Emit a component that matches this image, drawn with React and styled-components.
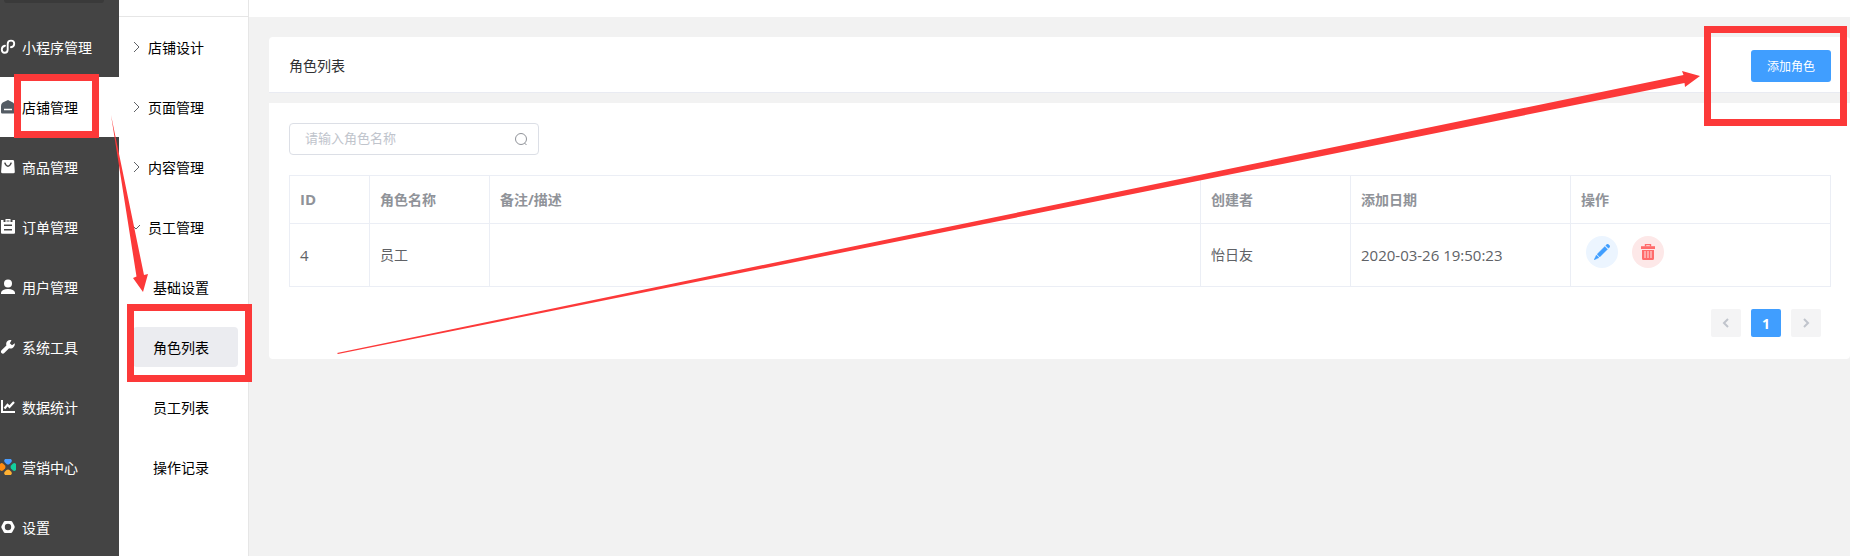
import React, { useState } from "react";
import styled, { createGlobalStyle } from "styled-components";

const GlobalStyle = createGlobalStyle`
  * {
    box-sizing: border-box;
  }
  body {
    margin: 0;
    background: #f2f2f2;
    color: #303133;
    font-family: "Open Sans", "Noto Sans CJK SC", sans-serif;
    font-size: 14px;
    line-height: 20px;
  }
  button, input {
    font-family: inherit;
  }
`;

const Page = styled.div`
  position: relative;
  display: flex;
  min-height: 100vh;
  overflow: hidden;
`;

const Sidebar = styled.nav`
  flex: none;
  width: 119px;
  height: 100vh;
  overflow: hidden;
  background: #444;
`;

const SidebarTop = styled.div`
  height: 17px;
  padding: 0 15px 0 4px;

  &::before {
    content: "";
    display: block;
    height: 3px;
    background: #3a3a3a;
    border-radius: 0 0 3px 3px;
  }
`;

const SidebarLink = styled.a`
  display: flex;
  align-items: center;
  gap: 6px;
  height: 60px;
  color: ${({ $active }) => ($active ? "#000" : "#fff")};
  background: ${({ $active }) => ($active ? "#fff" : "transparent")};
  text-decoration: none;

  svg {
    flex: none;
    color: ${({ $active }) => ($active ? "#545c64" : "#fff")};
  }
`;

const SidebarLabel = styled.span`
  padding-top: 2px;
`;

const SubMenu = styled.nav`
  flex: none;
  width: 130px;
  background: #fff;
  border-right: 1px solid #e6e6e6;
`;

const SubMenuTop = styled.div`
  height: 17px;
  border-bottom: 1px solid #e6e6e6;
`;

const GroupButton = styled.button`
  display: flex;
  align-items: center;
  gap: 7px;
  width: 100%;
  height: 60px;
  padding: 0 0 0 12px;
  border: none;
  background: none;
  color: #000;
  font-size: 14px;
  cursor: pointer;

  svg {
    color: #606266;
  }
`;

const SubLink = styled.a`
  display: flex;
  align-items: center;
  height: 40px;
  margin: 10px 10px 20px 14px;
  padding: 2px 0 0 20px;
  border-radius: 4px;
  background: ${({ $active }) => ($active ? "#ebecf0" : "transparent")};
  color: #000;
  text-decoration: none;

  & + & {
    margin-top: 0;
  }
`;

const Main = styled.main`
  flex: 1;
  min-width: 0;
`;

const TopBar = styled.div`
  height: 17px;
  background: #fff;
`;

const Content = styled.div`
  display: flex;
  flex-direction: column;
  gap: 10px;
  padding: 20px 0 0 20px;
`;

const TitleCard = styled.header`
  display: flex;
  align-items: center;
  justify-content: space-between;
  height: 56px;
  padding: 3px 19px 0 20px;
  background: #fff;
  border-bottom: 1px solid #e9ebf2;
  border-radius: 4px 4px 0 0;
`;

const Title = styled.h1`
  margin: 0;
  font-size: 14px;
  font-weight: 400;
`;

const AddButton = styled.button`
  width: 80px;
  height: 32px;
  padding: 0;
  border: none;
  border-radius: 3px;
  background: #409eff;
  color: #fff;
  font-size: 12px;
  cursor: pointer;
`;

const ListCard = styled.section`
  padding: 20px 19px 22px 20px;
  background: #fff;
  border-radius: 0 0 4px 4px;
`;

const SearchBox = styled.label`
  display: flex;
  align-items: center;
  width: 250px;
  height: 32px;
  padding: 0 10px 0 15px;
  border: 1px solid #dcdfe6;
  border-radius: 4px;
  color: #909399;
`;

const SearchInput = styled.input`
  flex: 1;
  min-width: 0;
  padding: 0 0 2px;
  border: none;
  outline: none;
  background: none;
  color: #606266;
  font-size: 13px;

  &::placeholder {
    color: #c0c4cc;
  }
`;

const Table = styled.table`
  width: 100%;
  margin-top: 20px;
  border-collapse: collapse;
  table-layout: fixed;
  color: #606266;

  th,
  td {
    padding: 0 10px;
    border: 1px solid #ebeef5;
    text-align: left;
  }
  th {
    height: 48px;
    color: #909399;
    font-weight: 700;
  }
  td {
    height: 63px;
  }
`;

const Col = styled.col`
  width: ${({ $width }) => ($width ? `${$width}px` : "auto")};
`;

const Latin = styled.span`
  font-size: 15px;
`;

const Actions = styled.div`
  display: flex;
  gap: 14px;
  padding: 0 5px 6px;
`;

const RoundButton = styled.button`
  display: flex;
  align-items: center;
  justify-content: center;
  width: 32px;
  height: 32px;
  padding: 0;
  border: none;
  border-radius: 50%;
  background: ${({ $danger }) => ($danger ? "#fde8e8" : "#ecf5ff")};
  color: ${({ $danger }) => ($danger ? "#ff6b6b" : "#409eff")};
  cursor: pointer;
`;

const Pagination = styled.div`
  display: flex;
  justify-content: flex-end;
  gap: 10px;
  margin-top: 22px;
  padding-right: 10px;
`;

const PageButton = styled.button`
  display: flex;
  align-items: center;
  justify-content: center;
  width: 30px;
  height: 28px;
  padding: 0;
  border: none;
  border-radius: 2px;
  background: ${({ $current }) => ($current ? "#409eff" : "#f4f4f5")};
  color: ${({ $current }) => ($current ? "#fff" : "#c0c4cc")};
  font-size: 14px;
  font-weight: 700;
`;

const Marks = styled.svg`
  position: absolute;
  top: 0;
  left: 0;
  pointer-events: none;
`;

const Icon = ({ size = 16, children }) => (
  <svg width={size} height={size} viewBox={`0 0 ${size} ${size}`} fill="none" aria-hidden="true">
    {children}
  </svg>
);

const icons = {
  mini: (
    <path
      d="M5 6.800C2.900 7.200 1.800 8.800 1.800 10.600c0 1.900 1.200 3.200 2.800 3.200 1.900 0 3.100-1.400 3.100-3.300V5c0-2 1.300-3.400 3.300-3.400 1.900 0 3.200 1.300 3.200 3.100 0 1.800-1.200 3.200-3.300 3.500"
      stroke="currentColor"
      strokeWidth="1.900"
      strokeLinecap="round"
    />
  ),
  store: (
    <path
      fillRule="evenodd"
      d="M8 1 13 3.600Q14.700 5 14.700 7v6.200q0 1.300-1.300 1.300H2.300Q1 14.500 1 13.200V7Q1 5 2.700 3.600ZM4 9.700v1.600h8V9.700Z"
      fill="currentColor"
    />
  ),
  goods: (
    <path
      fillRule="evenodd"
      d="M3.200 1h9.600q1.200 0 1.300 1.200l.7 10.500q.1 1.500-1.400 1.500H2.500Q1 14.200 1.100 12.700L1.900 2.200Q2 1 3.200 1ZM4 3.800C5 6.600 6.300 7.900 8 7.900s3-1.300 4-4.100l-1.500-.4C9.800 5.500 9 6.400 8 6.400S6.200 5.500 5.500 3.400Z"
      fill="currentColor"
    />
  ),
  order: (
    <path
      fillRule="evenodd"
      d="M1 1h2.500v2h2V0h5v3h2V1H15v12.700q0 1-1 1H2q-1 0-1-1ZM4 5.500v1.500h8V5.500ZM4 10v1.500h8V10ZM6.500 1.500v1h3v-1Z"
      fill="currentColor"
    />
  ),
  user: (
    <>
      <circle cx="8" cy="4.500" r="4" fill="currentColor" />
      <path d="M1 15v-1.500Q2 10 8 10t7 3.500V15Z" fill="currentColor" />
    </>
  ),
  tool: (
    <path
      d="M14.800 4.200 12 6.300 9.800 4.200 11.500 1.200C9 .4 6.500 2 6.200 4.500c-.1.800 0 1.500.2 2.100L1.500 11.300c-.8.900-.8 2 0 2.800s2 .8 2.800 0L9.100 9.300c3 1 6-1.300 5.700-5.100Z"
      fill="currentColor"
    />
  ),
  chart: (
    <>
      <path d="M2 1v12h13" stroke="currentColor" strokeWidth="2" />
      <path d="M4.500 9.500 7.500 5.800 9.500 7.800 14 3" stroke="currentColor" strokeWidth="2.200" />
    </>
  ),
  market: (
    <>
      <path d="M5 0h6q1.500 1.500.5 3L9.500 5Q8 6 6.500 5L4.500 3Q3.500 1.500 5 0Z" fill="#4a9dff" />
      <path d="M16 5v6q-1.500 1.500-3 .5l-2-2Q10 8 11 6.500l2-2Q14.500 3.500 16 5Z" fill="#13ce9f" />
      <path d="M5 16h6q1.500-1.500.5-3l-2-2Q8 10 6.500 11l-2 2Q3.500 14.500 5 16Z" fill="#ffb133" />
      <path d="M0 5v6q1.500 1.500 3 .5l2-2Q6 8 5 6.500l-2-2Q1.500 3.500 0 5Z" fill="#ff8b0f" />
    </>
  ),
  setting: (
    <path
      fillRule="evenodd"
      d="M5 2h6q.8 0 1.200.7l2.300 4.400q.4.900 0 1.800l-2.300 4.400q-.4.700-1.200.7H5q-.8 0-1.200-.7L1.500 8.900q-.4-.9 0-1.800l2.300-4.400Q4.200 2 5 2Zm3 2.800a3.200 3.200 0 1 0 0 6.400 3.200 3.200 0 0 0 0-6.400Z"
      fill="currentColor"
    />
  ),
};

const sidebarItems = [
  { label: "小程序管理", icon: "mini" },
  { label: "店铺管理", icon: "store", active: true },
  { label: "商品管理", icon: "goods" },
  { label: "订单管理", icon: "order" },
  { label: "用户管理", icon: "user" },
  { label: "系统工具", icon: "tool" },
  { label: "数据统计", icon: "chart" },
  { label: "营销中心", icon: "market" },
  { label: "设置", icon: "setting" },
];

const groups = ["店铺设计", "页面管理", "内容管理", "员工管理"];
const staffLinks = ["基础设置", "角色列表", "员工列表", "操作记录"];

const columns = [
  { title: "ID", width: 80, latin: true },
  { title: "角色名称", width: 120 },
  { title: "备注/描述" },
  { title: "创建者", width: 150 },
  { title: "添加日期", width: 220 },
  { title: "操作", width: 260 },
];

const roles = [
  { id: 4, name: "员工", remark: "", creator: "怡日友", date: "2020-03-26 19:50:23" },
];

const RoleTable = () => (
  <Table>
    <colgroup>
      {columns.map((col) => (
        <Col key={col.title} $width={col.width} />
      ))}
    </colgroup>
    <thead>
      <tr>
        {columns.map((col) => (
          <th key={col.title}>{col.latin ? <Latin>{col.title}</Latin> : col.title}</th>
        ))}
      </tr>
    </thead>
    <tbody>
      {roles.map((role) => (
        <tr key={role.id}>
          <td>
            <Latin>{role.id}</Latin>
          </td>
          <td>{role.name}</td>
          <td>{role.remark}</td>
          <td>{role.creator}</td>
          <td>
            <Latin>{role.date}</Latin>
          </td>
          <td>
            <Actions>
              <RoundButton aria-label="编辑">
                <Icon>
                  <path
                    d="M11.700 1.600 13 .3q.6-.5 1.200 0l1.500 1.500q.5.600 0 1.200l-1.300 1.300ZM10.800 2.500l2.700 2.700-7.700 7.700-2.700-2.700ZM2.400 11l2.600 2.600L0 16Z"
                    fill="currentColor"
                    stroke="currentColor"
                    strokeWidth=".4"
                  />
                </Icon>
              </RoundButton>
              <RoundButton $danger aria-label="删除">
                <Icon>
                  <path d="M5.500 2.500v-2h5v2" stroke="currentColor" strokeWidth="1.400" />
                  <path d="M1 2.200h14V5H1Z" fill="currentColor" />
                  <path
                    fillRule="evenodd"
                    d="M2 6h12v8.500q0 1.500-1.500 1.500h-9Q2 16 2 14.500ZM4.500 7v7h1V7Zm3 0v7h1V7Zm3 0v7h1V7Z"
                    fill="currentColor"
                  />
                </Icon>
              </RoundButton>
            </Actions>
          </td>
        </tr>
      ))}
    </tbody>
  </Table>
);

const App = () => {
  const [keyword, setKeyword] = useState("");

  return (
    <Page>
      <GlobalStyle />
      <Sidebar>
        <SidebarTop />
        {sidebarItems.map((item) => (
          <SidebarLink key={item.label} href="#" $active={item.active}>
            <Icon>{icons[item.icon]}</Icon>
            <SidebarLabel>{item.label}</SidebarLabel>
          </SidebarLink>
        ))}
      </Sidebar>
      <SubMenu>
        <SubMenuTop />
        {groups.map((label, i) => {
          const open = i === groups.length - 1;
          return (
            <GroupButton key={label} aria-expanded={open}>
              <Icon size={10}>
                <path d={open ? "M1 3l4 4 4-4" : "M3 0l5 5-5 5"} stroke="currentColor" />
              </Icon>
              {label}
            </GroupButton>
          );
        })}
        {staffLinks.map((label) => (
          <SubLink key={label} href="#" $active={label === "角色列表"}>
            {label}
          </SubLink>
        ))}
      </SubMenu>
      <Main>
        <TopBar />
        <Content>
          <TitleCard>
            <Title>角色列表</Title>
            <AddButton>添加角色</AddButton>
          </TitleCard>
          <ListCard>
            <SearchBox>
              <SearchInput
                value={keyword}
                onChange={(e) => setKeyword(e.target.value)}
                placeholder="请输入角色名称"
                aria-label="角色名称"
              />
              <Icon size={14}>
                <circle cx="7" cy="7" r="5.500" stroke="currentColor" />
                <path d="M10.500 11l2 2" stroke="currentColor" />
              </Icon>
            </SearchBox>
            <RoleTable />
            <Pagination>
              <PageButton disabled aria-label="上一页">
                <Icon size={12}>
                  <path d="M8 2 4 6l4 4" stroke="currentColor" strokeWidth="2" />
                </Icon>
              </PageButton>
              <PageButton $current>1</PageButton>
              <PageButton disabled aria-label="下一页">
                <Icon size={12}>
                  <path d="m4 2 4 4-4 4" stroke="currentColor" strokeWidth="2" />
                </Icon>
              </PageButton>
            </Pagination>
          </ListCard>
        </Content>
      </Main>
      {/* red guide boxes and arrows over the page */}
      <Marks width="1850" height="556" aria-hidden="true">
        <g fill="none" stroke="#fc3939" strokeWidth="7">
          <rect x="17.500" y="77.500" width="78" height="57" />
          <rect x="130.500" y="307.500" width="118" height="71" />
          <rect x="1707.500" y="29.500" width="136" height="93" />
        </g>
        <g fill="#fc3939">
          <path d="M111 115 144 275 148 274 143 292 133 278 136.500 276.500Z" />
          <path d="M337 353 1683.500 75 1682 71 1700 76 1685 87 1684.500 83 338 354Z" />
        </g>
      </Marks>
    </Page>
  );
};

export default App;
